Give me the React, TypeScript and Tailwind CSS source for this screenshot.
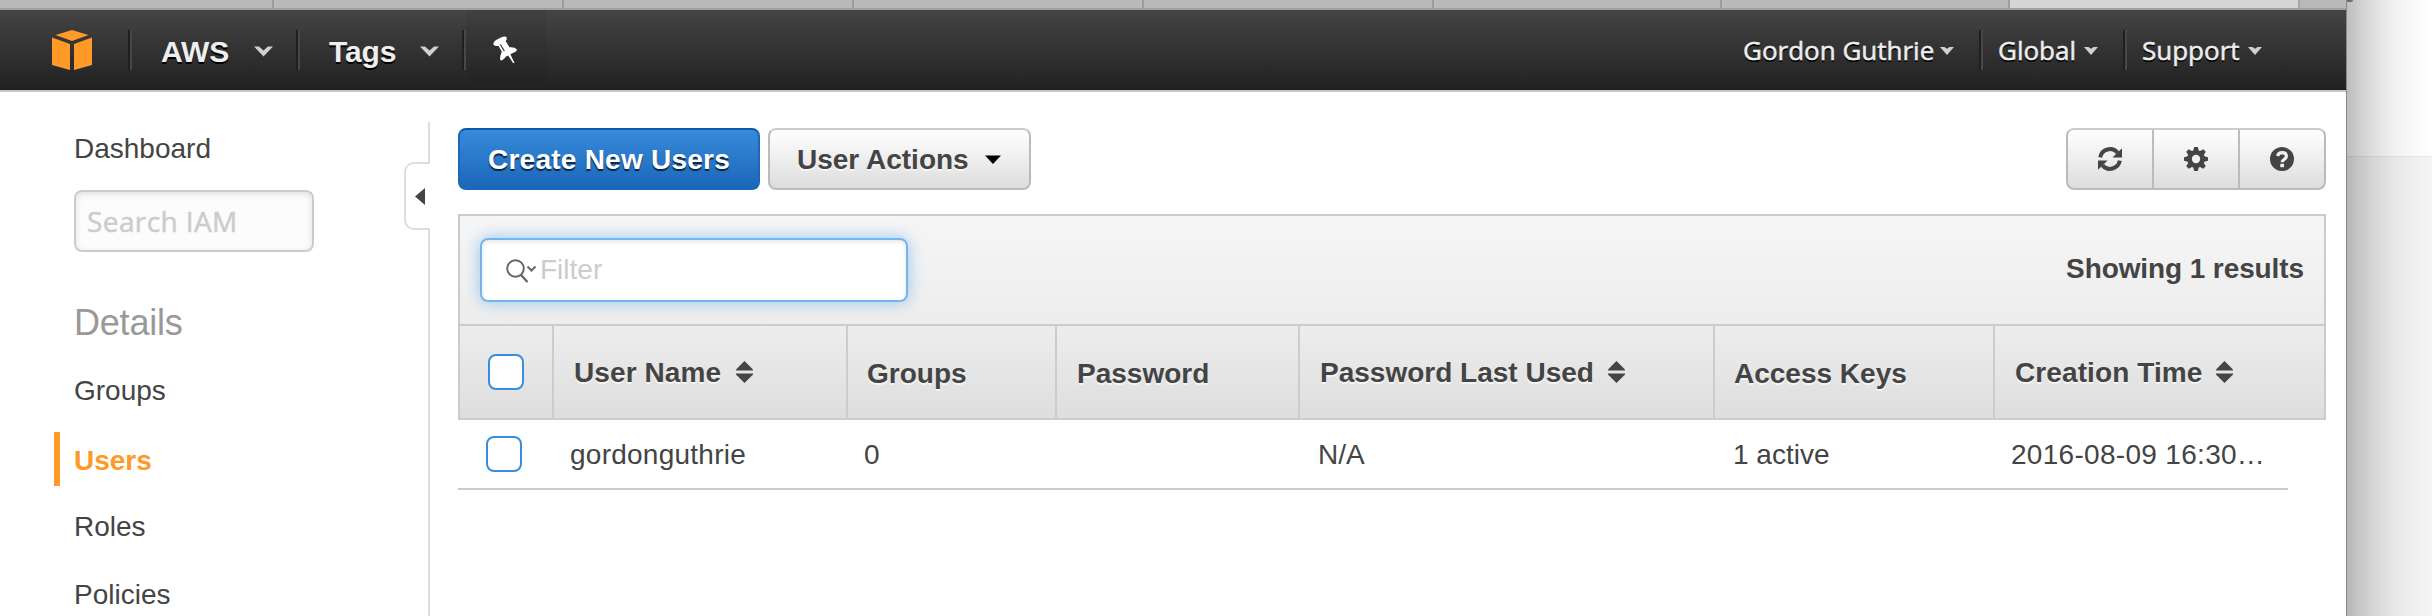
import React from "react";

const tabWidths = ["w-[274px]", "w-[290px]", "w-[290px]", "w-[290px]", "w-[290px]", "w-[288px]", "w-[288px]"];

function TabStrip() {
  return (
    <div className="flex h-[10px] shrink-0 border-b-2 border-[#a19fa1] bg-[#bab8bb]">
      {tabWidths.map((w, i) => (
        <div key={i} className={`${w} shrink-0 border-r-2 border-[#9d9b9e]`} />
      ))}
      <div className="w-[290px] shrink-0 border-r-2 border-[#a5a3a6] bg-[#d6d4d7]" />
    </div>
  );
}

function Divider() {
  return (
    <div className="mt-5 flex h-10 w-1 shrink-0">
      <div className="w-[2px] bg-[#1f1f1f]" />
      <div className="w-[2px] bg-[#484848]" />
    </div>
  );
}

function Cube() {
  return (
    <svg width="40" height="40" viewBox="0 0 40 40" fill="#ff9928">
      <path d="M20 0L36.5 5L20 11L3.5 5Z" />
      <path d="M0 7.5L18 14V40L0 35Z" />
      <path d="M40 7.5L22 14V40L40 35Z" />
    </svg>
  );
}

function BigChevron() {
  return (
    <svg width="19" height="11" viewBox="0 0 19 11" fill="#d0d0d0">
      <path d="M0 0.5H5L9.5 4.5L14 0.5H19L9.5 10.5Z" />
    </svg>
  );
}

function SmallChevron() {
  return (
    <svg width="14" height="8" viewBox="0 0 14 8" fill="#d0d0d0">
      <path d="M0 0H4.5L7 1.8L9.5 0H14L7 8Z" />
    </svg>
  );
}

function Pin() {
  return (
    <svg width="24" height="28" viewBox="53 16 24 28">
      <path
        d="M53.3 24.6Q53.3 21.5 56 20L62 17Q65 15.8 66.6 17.2Q67.2 19.8 65.6 21L69.5 27.2Q75 26.8 76.9 29.6Q76.9 31.8 72.8 32.9L70.4 34.2L74.5 43L73 43L68.2 35.4L66 36.6Q63 40.6 60.8 40.6Q59 38 61.8 31.8L58.6 25.9Q55.5 26.7 53.3 24.6Z"
        fill="#fff"
      />
      <path d="M60.3 24.5L64.3 31" stroke="#333" strokeWidth="1.2" />
    </svg>
  );
}

function NavBar() {
  return (
    <header className="h-[82px] shrink-0 border-b-2 border-[#c9c7ca]">
      <div className="flex h-20 border-b border-[#1c1a1c] bg-gradient-to-b from-[#444444] to-[#222222] pl-[52px] text-[#eeeeee]">
        <div className="mt-5 mr-9 w-10">
          <Cube />
        </div>
        <Divider />
        <div className="flex w-[164px] items-center pt-[3px] pl-[29px]">
          <span className="w-[93px] text-[30px] font-bold tracking-[-0.1px] [text-shadow:0_2px_0_#000]">AWS</span>
          <BigChevron />
        </div>
        <Divider />
        <div className="flex w-[162px] items-center pt-[3px] pl-[29px]">
          <span className="w-[91px] text-[30px] font-bold tracking-[-0.1px] [text-shadow:0_2px_0_#000]">Tags</span>
          <BigChevron />
        </div>
        <Divider />
        <div className="h-[72px] w-20 rounded-b-md bg-black/4 pt-[26px] pl-[27px]">
          <Pin />
        </div>
        <div className="mr-[60px] ml-auto flex font-['Open_Sans',sans-serif] text-[26px] [-webkit-text-stroke:0.5px_#eeeeee] [text-shadow:0_2px_0_#000]">
          <div className="flex w-[236px] items-center pt-[2px]">
            <span className="w-[197px] whitespace-nowrap">Gordon Guthrie</span>
            <SmallChevron />
          </div>
          <Divider />
          <div className="flex w-[140px] items-center pt-[2px] pl-[15px]">
            <span className="w-[86px] whitespace-nowrap">Global</span>
            <SmallChevron />
          </div>
          <Divider />
          <div className="flex w-[159px] items-center pt-[2px] pl-[15px]">
            <span className="w-[106px] whitespace-nowrap">Support</span>
            <SmallChevron />
          </div>
        </div>
      </div>
    </header>
  );
}

function Sidebar() {
  return (
    <aside className="flex h-[524px] w-[430px] shrink-0">
      <nav className="w-[404px] text-[28px] leading-8 text-[#444444]">
        <div className="mt-[41px] pl-[74px]">Dashboard</div>
        <input
          placeholder="Search IAM"
          className="mt-[25px] ml-[74px] block h-[62px] w-60 rounded-lg border-2 border-[#cccccc] bg-[#fcfcfc] px-[11px] font-['Open_Sans',sans-serif] text-[28px] tracking-[0.4px] shadow-[inset_0_2px_6px_rgba(0,0,0,0.12)] [-webkit-text-stroke:0.5px_#cccccc] placeholder:text-[#cccccc]"
        />
        <div className="mt-[51px] pl-[74px] text-[36px] leading-10 tracking-[-0.2px] text-[#999999]">Details</div>
        <div className="mt-[32px] pl-[74px]">Groups</div>
        <div className="mt-[25px] ml-[54px] h-[54px] border-l-6 border-[#ff9928] pt-[13px] pl-[14px] font-bold text-[#ff9928]">
          Users
        </div>
        <div className="mt-[25px] pl-[74px]">Roles</div>
        <div className="mt-[36px] pl-[74px]">Policies</div>
      </nav>
      <div className="flex w-[26px] flex-col pt-[30px]">
        <div className="h-10 border-r-2 border-[#dddddd]" />
        <div className="flex h-[68px] items-center rounded-l-[10px] border-y-2 border-l-2 border-[#dddddd] pl-[9px]">
          <svg width="10" height="17" viewBox="0 0 10 17" fill="#444">
            <path d="M10 0V17L0 8.5Z" />
          </svg>
        </div>
        <div className="flex-1 border-r-2 border-[#dddddd]" />
      </div>
    </aside>
  );
}

function RefreshIcon() {
  return (
    <svg width="24" height="24" viewBox="0 0 24 24" fill="#444">
      {[0, 180].map((a) => (
        <g key={a} transform={`rotate(${a} 12 12)`}>
          <path d="M2.2 10.3A9.9 9.9 0 0 1 19.6 5.8" fill="none" stroke="#444" strokeWidth="4" />
          <path d="M24 1.2V10.4H14.4Z" />
        </g>
      ))}
    </svg>
  );
}

function GearIcon() {
  return (
    <svg width="24" height="24" viewBox="0 0 24 24">
      <g fill="#444">
        {[0, 45, 90, 135].map((a) => (
          <path key={a} d="M10.2 0H13.8L14.8 4V20L13.8 24H10.2L9.2 20V4Z" transform={`rotate(${a} 12 12)`} />
        ))}
        <circle cx="12" cy="12" r="9" />
      </g>
      <circle cx="12" cy="12" r="4.2" fill="#f0f0f0" />
    </svg>
  );
}

function HelpIcon() {
  return (
    <svg width="24" height="24" viewBox="0 0 24 24">
      <circle cx="12" cy="12" r="12" fill="#444" />
      <path d="M7.8 9.2Q8 5.6 12.2 5.6Q16.4 5.7 16.4 9Q16.4 11 14.2 12.3Q12.2 13.5 12.2 15.2" fill="none" stroke="#f0f0f0" strokeWidth="3.2" />
      <path d="M10.3 16.8H14V20.2H10.3Z" fill="#f0f0f0" />
    </svg>
  );
}

function Toolbar() {
  return (
    <div className="flex h-[62px]">
      <button className="w-[302px] rounded-lg border-2 border-[#1a66b8] border-t-[#0f57a8] bg-gradient-to-b from-[#378adc] to-[#1b67b8] pt-[2px] text-[28px] font-bold tracking-[0.25px] whitespace-nowrap text-white [text-shadow:0_2px_1px_rgba(0,0,0,0.7)]">
        Create New Users
      </button>
      <button className="ml-2 flex w-[263px] items-center rounded-lg border-2 border-[#bbbbbb] border-t-[#cccccc] bg-gradient-to-b from-white to-[#dddddd] pl-[27px] text-[28px] font-bold whitespace-nowrap text-[#444444] [text-shadow:0_2px_0_#f5f5f5]">
        <span className="w-[188px] pt-[2px] text-left">User Actions</span>
        <svg width="16" height="9" viewBox="0 0 16 9">
          <path d="M0 0.5H16L8 9Z" fill="#000" />
        </svg>
      </button>
      <div className="ml-auto flex w-[260px] rounded-lg border-2 border-[#bbbbbb] border-t-[#cccccc] bg-gradient-to-b from-white to-[#dddddd]">
        <button className="flex w-[86px] items-center justify-center border-r-2 border-[#bbbbbb]">
          <RefreshIcon />
        </button>
        <button className="flex w-[86px] items-center justify-center border-r-2 border-[#bbbbbb]">
          <GearIcon />
        </button>
        <button className="flex w-[84px] items-center justify-center">
          <HelpIcon />
        </button>
      </div>
    </div>
  );
}

function SortIcon() {
  return (
    <svg width="17" height="22" viewBox="0 0 17 22" fill="#444">
      <path d="M8.5 0L17 8.5V9.5H0V8.5Z" />
      <path d="M8.5 22L17 13.5V12.5H0V13.5Z" />
    </svg>
  );
}

function Checkbox() {
  return <div className="size-9 rounded-lg border-2 border-[#3a8cdc] bg-white" />;
}

const columns = [
  { label: "User Name", width: "w-[294px] pl-[20px]", text: "w-[162px] tracking-[0.1px]", sort: true },
  { label: "Groups", width: "w-[209px] pl-[19px]", text: "", sort: false },
  { label: "Password", width: "w-[243px] pl-[20px]", text: "", sort: false },
  { label: "Password Last Used", width: "w-[415px] pl-[20px]", text: "w-[288px]", sort: true },
  { label: "Access Keys", width: "w-[280px] pl-[19px]", text: "", sort: false },
];

function UserTable() {
  return (
    <section className="mt-6 text-[28px] text-[#444444]">
      <div className="border-2 border-[#cccccc] font-bold">
        <div className="flex h-[110px] justify-between border-b-2 border-[#cccccc] bg-gradient-to-b from-[#f6f6f6] to-[#ededed] pt-[22px] pr-[20px] pl-5">
          <div className="flex h-16 w-[428px] items-center rounded-lg border-2 border-[#74b5ee] bg-white pl-6 shadow-[0_0_16px_rgba(82,168,236,0.6),inset_0_2px_4px_rgba(0,0,0,0.1)]">
            <svg width="31" height="26" viewBox="0 0 31 26" fill="none" stroke="#666" strokeWidth="2" className="mt-[2px]">
              <circle cx="9.5" cy="10.5" r="8.3" />
              <path d="M15 17L21.5 24" strokeWidth="2.4" />
              <path d="M21.5 8.5L25.5 12.5L29.5 8.5" />
            </svg>
            <input placeholder="Filter" className="ml-[3px] w-80 font-normal outline-none placeholder:text-[#cccccc]" />
          </div>
          <div className="pt-[15px] leading-8 tracking-[-0.1px]">Showing 1 results</div>
        </div>
        <div className="flex h-[92px] bg-gradient-to-b from-[#ededed] to-[#dedede] [text-shadow:0_2px_0_#f5f5f5]">
          <div className="flex w-[94px] items-center border-r-2 border-[#cccccc] pl-7">
            <Checkbox />
          </div>
          {columns.map((c) => (
            <div key={c.label} className={`${c.width} flex items-center border-r-2 border-[#cccccc] whitespace-nowrap`}>
              {c.sort ? (
                <>
                  <span className={`${c.text} pt-px`}>{c.label}</span>
                  <SortIcon />
                </>
              ) : (
                <span className="pt-[3px]">{c.label}</span>
              )}
            </div>
          ))}
          <div className="flex flex-1 items-center pl-[20px] whitespace-nowrap">
            <span className="w-[201px] pt-px tracking-[0.1px]">Creation Time</span>
            <SortIcon />
          </div>
        </div>
      </div>
      <div className="flex h-[70px] w-[1830px] items-center border-b-2 border-[#cccccc] whitespace-nowrap">
        <div className="w-[112px] pl-7">
          <Checkbox />
        </div>
        <div className="w-[294px] pt-px tracking-[0.25px]">gordonguthrie</div>
        <div className="w-[454px] pt-px">0</div>
        <div className="w-[415px] pt-px">N/A</div>
        <div className="w-[278px] pt-px">1 active</div>
        <div className="flex-1 pt-px tracking-[0.3px]">2016-08-09 16:30…</div>
      </div>
    </section>
  );
}

function Desktop() {
  return (
    <div className="relative flex flex-1 flex-col border-l border-[#8a8a8a]">
      <div className="h-[156px] bg-white" />
      <div className="flex-1 border-t border-[#e8e8e8] bg-[#f5f5f5]" />
      <div className="absolute inset-0 bg-[linear-gradient(to_right,rgba(0,0,0,0.26),rgba(0,0,0,0.19)_15%,rgba(0,0,0,0.12)_33%,rgba(0,0,0,0.06)_55%,rgba(0,0,0,0.02)_80%,transparent)]" />
      <div className="absolute top-0 left-0 h-[2px] w-[6px] rounded-br-sm bg-[#6d6d70]" />
    </div>
  );
}

export default function App() {
  return (
    <div className="flex h-[616px] w-[2432px] overflow-hidden bg-white font-['Liberation_Sans',Arial,sans-serif]">
      <div className="flex w-[2346px] shrink-0 flex-col">
        <TabStrip />
        <NavBar />
        <div className="flex">
          <Sidebar />
          <main className="flex-1 pt-9 pr-5 pl-7">
            <Toolbar />
            <UserTable />
          </main>
        </div>
      </div>
      <Desktop />
    </div>
  );
}
